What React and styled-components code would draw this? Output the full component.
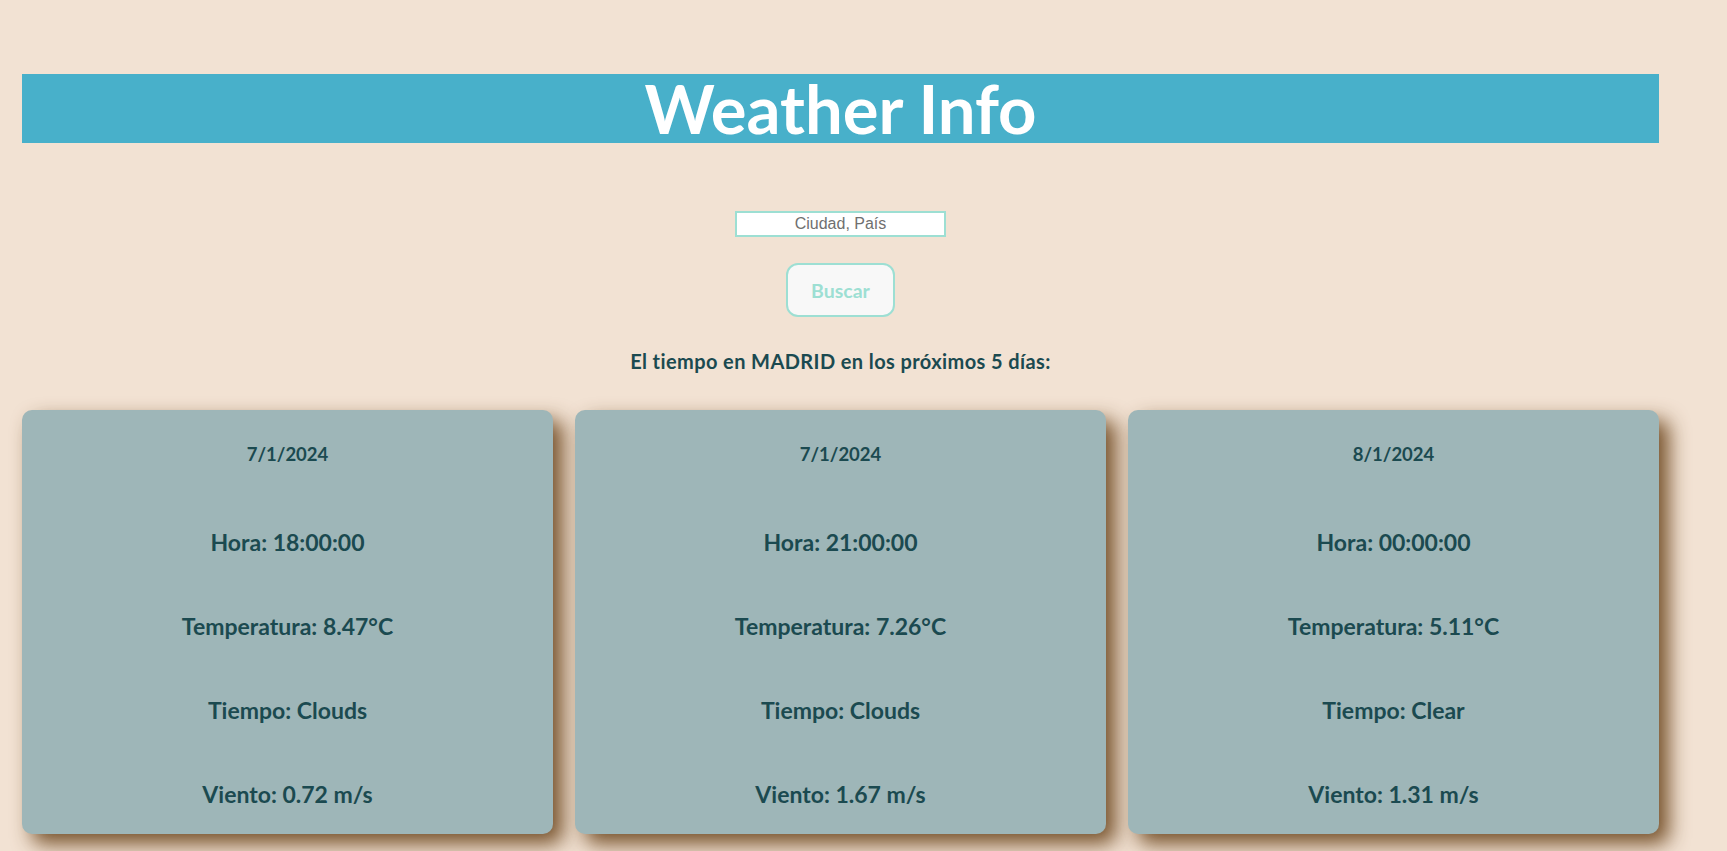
import React from 'react';
import styled, { createGlobalStyle } from 'styled-components';

const forecast = [
  { date: '7/1/2024', hour: '18:00:00', temp: '8.47', sky: 'Clouds', wind: '0.72' },
  { date: '7/1/2024', hour: '21:00:00', temp: '7.26', sky: 'Clouds', wind: '1.67' },
  { date: '8/1/2024', hour: '00:00:00', temp: '5.11', sky: 'Clear', wind: '1.31' },
];

const GlobalStyle = createGlobalStyle`
  body {
    margin: 0;
    background: #f2e2d3;
    font-family: Lato, "Open Sans", sans-serif;
  }
`;

const App = () => (
  <>
    <GlobalStyle />
    <Page>
      <Header>Weather Info</Header>
      <SearchForm>
        <CityInput type="text" placeholder="Ciudad, País" />
        <SearchButton type="button">Buscar</SearchButton>
      </SearchForm>
      <Subtitle>El tiempo en MADRID en los próximos 5 días:</Subtitle>
      <CardGrid>
        {forecast.map((item, i) => (
          <Card key={i}>
            <CardDate>{item.date}</CardDate>
            <CardRow>Hora: {item.hour}</CardRow>
            <CardRow>Temperatura: {item.temp}°C</CardRow>
            <CardRow>Tiempo: {item.sky}</CardRow>
            <CardRow>Viento: {item.wind} m/s</CardRow>
          </Card>
        ))}
      </CardGrid>
    </Page>
  </>
);

const Page = styled.div`
  width: 1637px;
  padding: 74px 0 40px 22px;
  display: flex;
  flex-direction: column;
  align-items: center;
`;

const Header = styled.h1`
  width: 100%;
  margin: 0;
  background: #48b0ca;
  color: #ffffff;
  font-size: 67px;
  font-weight: 700;
  line-height: 69px;
  text-align: center;
`;

const SearchForm = styled.div`
  display: flex;
  flex-direction: column;
  align-items: center;
  gap: 26px;
  margin-top: 68px;
`;

const CityInput = styled.input`
  box-sizing: border-box;
  width: 211px;
  height: 26px;
  border: 2px solid #9ddfd3;
  background: #ffffff;
  font-family: "Liberation Sans", Arial, sans-serif;
  font-size: 16px;
  text-align: center;
  outline: none;

  &::placeholder {
    color: #6f6f6f;
  }
`;

const SearchButton = styled.button`
  box-sizing: border-box;
  width: 109px;
  height: 54px;
  border: 2px solid #9ddfd3;
  border-radius: 12px;
  background: #f8f8f8;
  color: #9ddfd3;
  font-family: Lato, "Open Sans", sans-serif;
  font-size: 19.5px;
  font-weight: 700;
  cursor: pointer;
`;

const Subtitle = styled.p`
  margin: 31px 0 0;
  color: #1b4a50;
  font-size: 20px;
  font-weight: 700;
  letter-spacing: 0.4px;
  line-height: 26px;
`;

const CardGrid = styled.div`
  width: 100%;
  display: grid;
  grid-template-columns: repeat(3, 1fr);
  gap: 22px;
  margin-top: 36px;
`;

const Card = styled.div`
  height: 424px;
  box-sizing: border-box;
  padding: 32px 0 0;
  display: flex;
  flex-direction: column;
  align-items: center;
  gap: 55px;
  background: #9eb6b8;
  border-radius: 10px;
  box-shadow: 10px 10px 20px rgba(105, 66, 26, 0.9);
  color: #1b4a50;
  font-weight: 700;
`;

const CardDate = styled.p`
  margin: 0 0 7px;
  font-size: 18.5px;
  line-height: 24px;
`;

const CardRow = styled.p`
  margin: 0;
  font-size: 23px;
  line-height: 29px;
`;

export default App;
